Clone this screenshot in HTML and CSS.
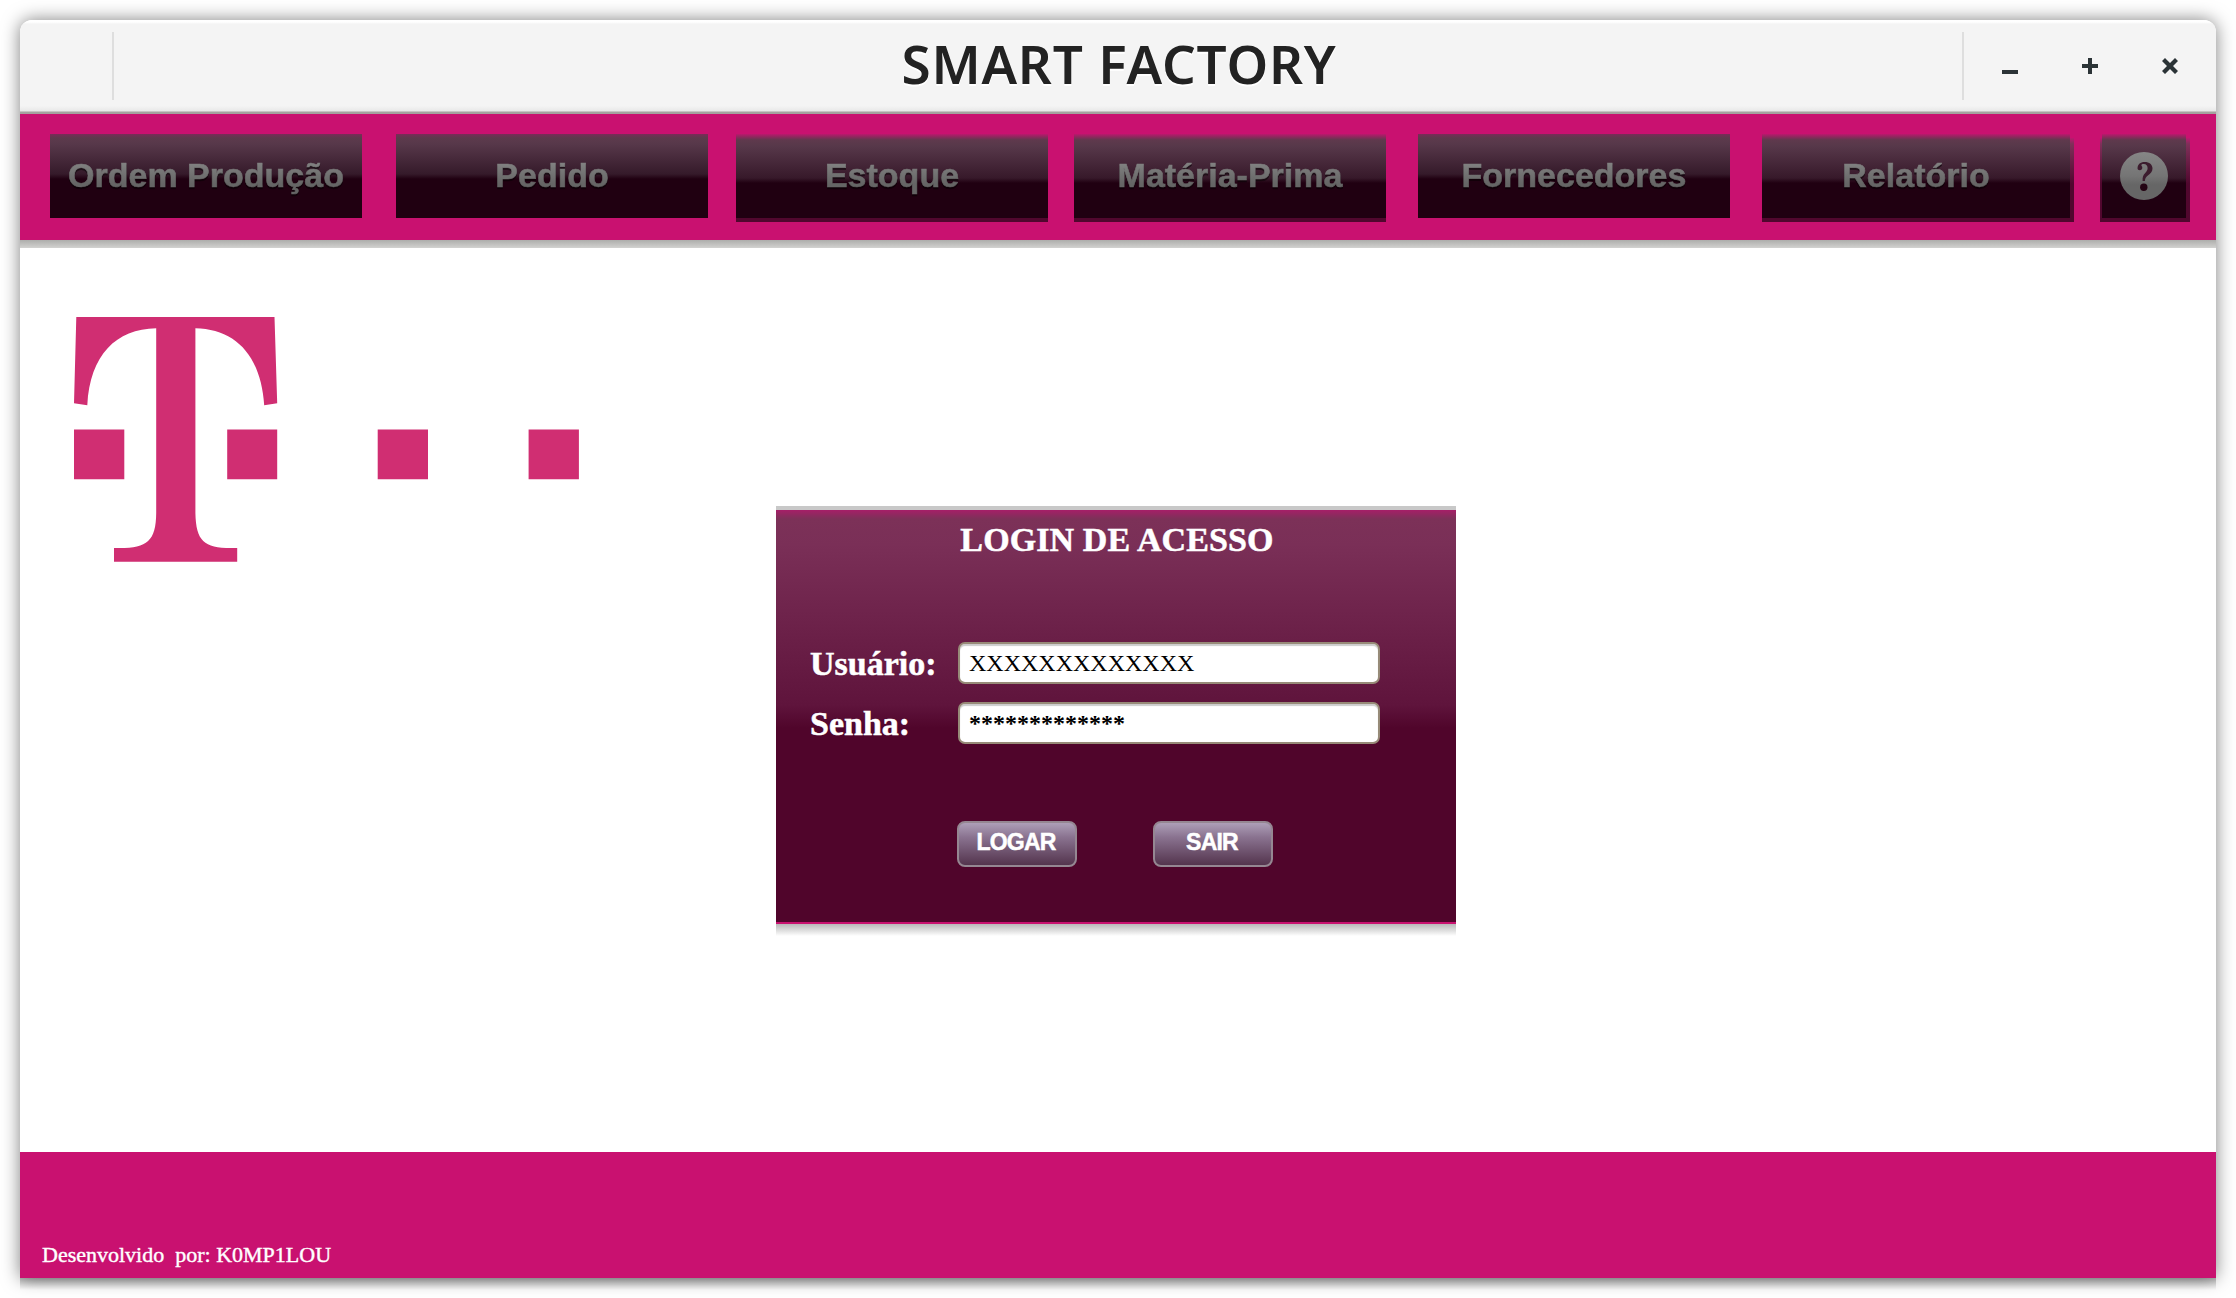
FILE: index.html
```html
<!DOCTYPE html>
<html lang="pt-BR">
<head>
<meta charset="utf-8">
<title>Smart Factory</title>
<link rel="stylesheet" href="styles.css">
</head>
<body>
<div class="window">
  <header class="titlebar">
    <div class="titlebar-side"></div>
    <h1 class="title"><span>SMART FACTORY</span></h1>
    <div class="controls">
      <svg width="16" height="16" viewBox="0 0 16 16"><rect y="12" width="16" height="4"/></svg>
      <svg width="16" height="16" viewBox="0 0 16 16"><path d="M6 0h4v6h6v4h-6v6H6v-6H0V6h6z"/></svg>
      <svg width="16" height="16" viewBox="0 0 16 16"><path d="M3 0l5 5 5-5 3 3-5 5 5 5-3 3-5-5-5 5-3-3 5-5-5-5z"/></svg>
    </div>
  </header>
  <nav class="nav">
    <button class="nav-btn"><span>Ordem Produção</span></button>
    <button class="nav-btn orders"><span>Pedido</span></button>
    <button class="nav-btn raised stock"><span>Estoque</span></button>
    <button class="nav-btn raised material"><span>Matéria-Prima</span></button>
    <button class="nav-btn suppliers"><span>Fornecedores</span></button>
    <button class="nav-btn raised report"><span>Relatório</span></button>
    <button class="nav-btn raised help" aria-label="Ajuda">
      <svg width="48" height="48" viewBox="0 0 48 48">
        <defs><linearGradient id="disc" x1="0" y1="0" x2="0" y2="1"><stop offset="0" stop-color="#868686"/><stop offset=".5" stop-color="#757575"/><stop offset=".68" stop-color="#666"/><stop offset="1" stop-color="#666"/></linearGradient></defs>
        <circle cx="24" cy="24" r="24" fill="url(#disc)"/>
        <path d="M17.5 16.2c.2-4 3-6.200 7-6.200 5 0 8 2.600 8 6.600 0 3.400-2.200 5.200-4.300 6.700-2.200 1.600-3.200 2.900-3.300 5.800h-2.300c-.2-4 .6-5.800 2.600-8 1.600-1.700 2.400-3 2.400-5 0-2.600-1.300-4.200-3.800-4.200-1.500 0-2.500.5-2.500 1.200 0 .8 1 1.300 1 2.700 0 1.500-1 2.400-2.400 2.400-1.500 0-2.400-.9-2.400-2z" fill="#3c1c2e"/>
        <circle cx="23.800" cy="35.300" r="3.700" fill="#240413"/>
      </svg>
    </button>
  </nav>
  <main class="content">
    <svg class="logo" width="506" height="246" viewBox="74 317 506 246">
      <path d="M76.300 317H274.500L277.200 403.300L264.200 405.300C261 355 235 329 195.400 328.300V513C196 541 204 548 231 548H237.200V561.700H114V548H120C147 548 156 541 156.200 513V328.300C116 329 90 355 87.300 405.300L74 403.300Z"/>
      <path d="M74 429.500h50.300v49.700H74zM227.200 429.500h50v49.700h-50zM377.700 429.500H428v49.700h-50.300zM528.600 429.500h50.300v49.700h-50.300z"/>
    </svg>
    <form class="login">
      <h2 class="login-title">LOGIN DE ACESSO</h2>
      <div class="fields">
        <label for="user">Usuário:</label><input id="user" type="text" value="XXXXXXXXXXXXX">
        <label for="pass">Senha:</label><input id="pass" class="masked" type="text" value="*************">
      </div>
      <div class="actions">
        <button type="button">LOGAR</button>
        <button type="button">SAIR</button>
      </div>
    </form>
  </main>
  <footer class="footer">Desenvolvido&nbsp; por: K0MP1LOU</footer>
</div>
</body>
</html>
```
FILE: styles.css
```css
* { box-sizing: border-box; }
body { margin: 0; padding: 20px; background: #fff; height: 1298px; overflow: hidden; }
button { font: inherit; border: 0; padding: 0; margin: 0; }

.window {
  position: relative;
  display: flex;
  flex-direction: column;
  height: 1258px;
  background: #fff;
  border-radius: 12px 12px 0 0;
  box-shadow: 0 0 18px rgba(0, 0, 0, .5);
}
/* darker shade under the bottom edge */
.window::after {
  content: "";
  position: absolute;
  left: 0;
  right: 0;
  top: 100%;
  height: 12px;
  background: linear-gradient(rgba(0, 0, 0, .27), rgba(0, 0, 0, 0));
}

.titlebar {
  display: flex;
  height: 94px;
  padding-top: 12px;
  background: linear-gradient(#fff 0 2px, #f4f4f4 4px, #f4f4f4 86px, #e8e8e8 91px, #a5a19f 92px, #a5a19f);
  border-radius: 12px 12px 0 0;
}
.titlebar-side { width: 94px; height: 68px; border-right: 2px solid #dedede; }
.title {
  flex: 1;
  margin: 0 0 0 162px;
  text-align: center;
  font: 600 53px/64px "Noto Sans", sans-serif;
  letter-spacing: .8px;
  color: #222;
  text-shadow: 0 2px 0 #fff;
}
.title span { display: inline-block; white-space: nowrap; }
.controls {
  display: flex;
  gap: 64px;
  align-items: center;
  width: 254px;
  height: 68px;
  padding-left: 38px;
  border-left: 2px solid #dedede;
  fill: #2b3336;
}

.nav { display: flex; align-items: flex-start; height: 126px; padding: 20px 0 0 30px; background: #c91170; position: relative; z-index: 0; }
.nav::after {
  content: "";
  position: absolute;
  left: 0;
  right: 0;
  top: 100%;
  height: 8px;
  background: linear-gradient(#adadab, #d2d2d0);
}
.nav-btn {
  position: relative;
  flex: none;
  width: 312px;
  height: 84px;
  background: linear-gradient(#7a2c58 0, #5d3a4c 4px, #57384a 10px, #351a2a 40px, #200011 45px);
  font: bold 34px/82px "Liberation Sans", Arial, sans-serif;
}
.nav-btn span {
  display: block;
  height: 84px;
  color: transparent;
  -webkit-text-stroke: .6px transparent;
  background: linear-gradient(#858585 26px, #656565 50px);
  -webkit-background-clip: text;
  background-clip: text;
  filter: drop-shadow(0 2px 0 rgba(0, 0, 0, .5));
}
.raised { background: linear-gradient(#bb186d 0, #5f394d 6px, #57384a 12px, #37192a 44px, #200011 49px); }
.raised::before {
  content: "";
  position: absolute;
  z-index: -1;
  top: 4px;
  left: 0;
  right: 0;
  bottom: -4px;
  background: linear-gradient(#bd1870 0, #7f3059 6px, #51072e 46px);
}
.orders { margin-left: 34px; }
.stock { margin-left: 28px; }
.material { margin-left: 26px; }
.suppliers { margin-left: 32px; }
.report { width: 308px; margin-left: 32px; }
.report::before { right: -4px; }
.help { display: flex; justify-content: center; align-items: center; width: 84px; margin-left: 32px; }
.help::before { left: -2px; right: -4px; }

.content { flex: 1; display: flex; align-items: flex-start; padding-left: 54px; }
.logo { margin-top: 77px; margin-top: 69px; fill: #d02e72; }
.login {
  position: relative;
  width: 680px;
  height: 418px;
  margin: 258px 0 0 196px;
  border-top: 4px solid #c8c8c8;
  border-bottom: 2px solid #c91170;
  background: linear-gradient(#a61f68 0, #7c3158 9px, #7a2f57 35px, #5f143c 195px, #50052b 218px);
  color: #fff;
}
.content { padding-top: 8px; }
.login::after {
  content: "";
  position: absolute;
  left: 0;
  right: 0;
  top: calc(100% + 2px);
  height: 12px;
  background: linear-gradient(rgba(0, 0, 0, .28), rgba(0, 0, 0, 0));
}
.login-title {
  margin: 10px 0 0;
  padding-left: 2px;
  text-align: center;
  font: bold 34px/40px "Liberation Serif", "Times New Roman", serif;
  -webkit-text-stroke: .5px #fff;
  letter-spacing: .1px;
}
.fields {
  display: grid;
  grid-template-columns: 148px 422px;
  grid-template-rows: 42px 42px;
  row-gap: 18px;
  padding: 82px 0 0 34px;
  font: bold 34px/44px "Liberation Serif", "Times New Roman", serif;
}
.fields label { -webkit-text-stroke: .5px #fff; }
.fields input {
  width: 422px;
  height: 42px;
  border: 2px solid #978b78;
  border-radius: 7px;
  padding: 0 9px;
  font: 24px/38px "Liberation Serif", "Times New Roman", serif;
  color: #000;
  background: #fff;
  box-shadow: inset 0 2px 1px #ccc;
}
.fields .masked { font-weight: bold; }
.actions { display: flex; gap: 76px; padding: 77px 0 0 181px; }
.actions button {
  width: 120px;
  height: 46px;
  padding-right: 2px;
  border: 2px solid #958792;
  border-radius: 8px;
  background: linear-gradient(#b2a5bd, #8a7390 35%, #503049);
  background-origin: border-box;
  font: bold 23px/39px "Liberation Sans", Arial, sans-serif;
  padding-bottom: 3px;
  letter-spacing: -.8px;
  color: #fff;
  -webkit-text-stroke: .5px #fff;
}
.footer {
  height: 126px;
  padding: 90px 0 0 22px;
  background: #c91170;
  color: #fff;
  font: 22px/26px "Liberation Serif", "Times New Roman", serif;
  -webkit-text-stroke: .4px #fff;
}
```
